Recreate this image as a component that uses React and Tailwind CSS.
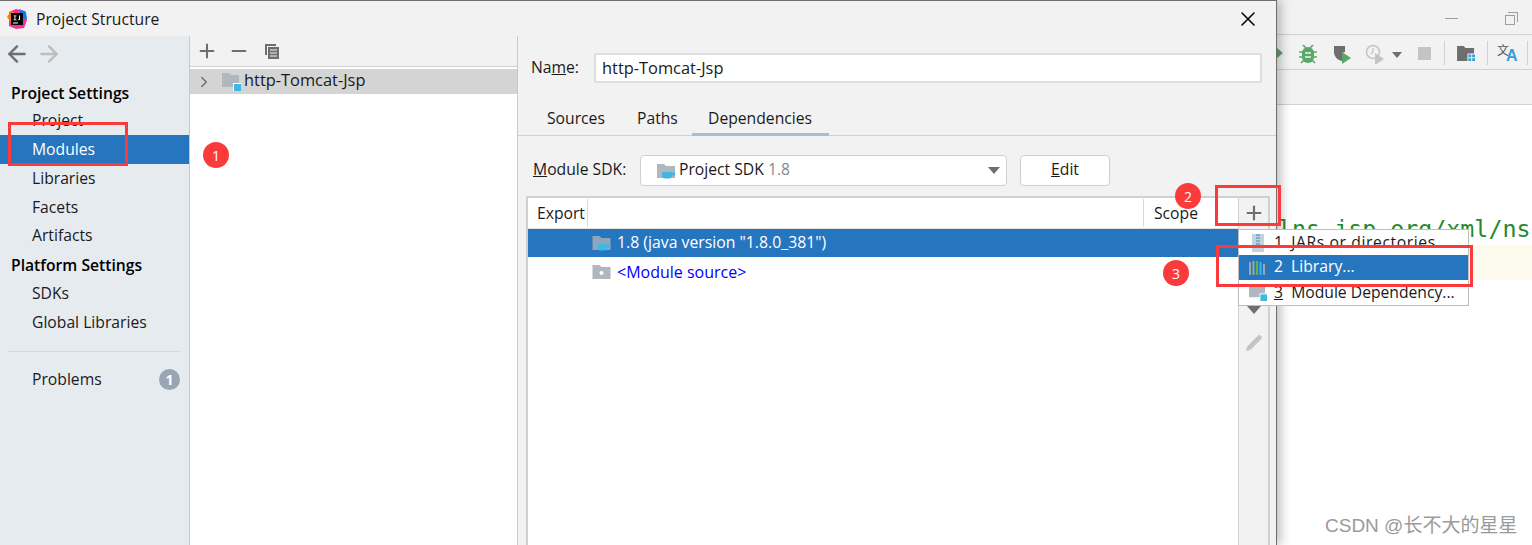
import React from 'react';
import { Plus, Minus, Pencil, X, ChevronRight, ArrowLeft, ArrowRight } from 'lucide-react';

const FolderIcon = ({ className = '', fill = '#afb8bf', children }) => (
  <svg viewBox="0 0 18 16" className={className}>
    <path d="M0 1h7l2 2h9v12H0z" fill={fill} />
    {children}
  </svg>
);

const CupBadge = () => (
  <g fill="#40b6e0">
    <path d="M5 9h10v3.500a3 3 0 0 1-3 3H8a3 3 0 0 1-3-3z" />
    <path d="M15 9.500h3v3h-3z" />
  </g>
);

const ModuleIcon = ({ className = '' }) => (
  <svg viewBox="0 0 20 18" className={className}>
    <path d="M0 0h7l2 2h8v12H0z" fill="#afb8bf" />
    <path d="M11 10h8v8h-8z" fill="#fff" />
    <path d="M12 11h7v7h-7z" fill="#40b6e0" />
  </svg>
);

const SideItem = ({ label, active }) => (
  <div className={`h-[28.8px] flex items-center pl-8 pt-px ${active ? 'bg-[#2675bf] text-white' : 'text-[#1a1a1a]'}`}>{label}</div>
);

const RedBox = ({ className }) => <div className={`absolute border-[3px] border-[#fb3a3c] ${className}`} />;

const RedDot = ({ n, className }) => (
  <div className={`absolute w-[26px] h-[26px] rounded-full bg-[#fb3a3c] text-white text-[14px] flex items-center justify-center ${className}`}>{n}</div>
);

const IdeToolbar = () => (
  <div className="h-[35px] border-b border-[#d1d1d1] relative overflow-hidden">
    <svg viewBox="0 0 6 10" className="w-[6px] h-[10px] absolute left-0 top-[13px]"><path d="M0 0l6 5-6 5z" fill="#59a869" /></svg>
    <svg viewBox="0 0 20 20" className="w-5 h-5 absolute left-[21px] top-[9px]">
      <path d="M10 3a6 6 0 0 1 6 6v4a6 6 0 0 1-12 0V9a6 6 0 0 1 6-6z" fill="#59a869" />
      <path d="M5 1l3 3M15 1l-3 3M1 8h4M19 8h-4M1 13h4M19 13h-4M3 19l3-3M17 19l-3-3" stroke="#59a869" strokeWidth="1.600" />
      <path d="M7 9h6M7 13h6" stroke="#f2f2f2" strokeWidth="1.500" />
    </svg>
    <svg viewBox="0 0 20 20" className="w-5 h-5 absolute left-[55px] top-[9px]">
      <path d="M2 2h11v6l-3 1v8C5 16 2 12 2 8z" fill="#6e6e6e" />
      <path d="M10 8l9 6-9 6z" fill="#59a869" />
    </svg>
    <svg viewBox="0 0 20 20" className="w-5 h-5 absolute left-[88px] top-[9px]">
      <circle cx="8" cy="8" r="6.500" fill="none" stroke="#c4c4c4" strokeWidth="1.500" />
      <path d="M8 4v4l-2 2" fill="none" stroke="#c4c4c4" strokeWidth="1.200" />
      <path d="M10 9l9 6-9 6z" fill="#c4c4c4" />
    </svg>
    <svg viewBox="0 0 10 6" className="w-[10px] h-[6px] absolute left-[115px] top-[17px]"><path d="M0 0h10L5 6z" fill="#6e6e6e" /></svg>
    <div className="absolute left-[141px] top-[12px] w-[13px] h-[13px] bg-[#c4c4c4]" />
    <div className="absolute left-[167px] top-[6px] w-px h-[24px] bg-[#d1d1d1]" />
    <svg viewBox="0 0 20 18" className="w-[19px] h-[17px] absolute left-[180px] top-[11px]">
      <path d="M0 0h7l2 2h9v6h-7v8H0z" fill="#6e6e6e" />
      <path d="M12 9h3v3h-3zM16 9h3v3h-3zM12 13h3v3h-3zM16 13h3v3h-3z" fill="#389fd6" />
    </svg>
    <div className="absolute left-[210px] top-[6px] w-px h-[24px] bg-[#d1d1d1]" />
    <div className="absolute left-[220px] top-[8px] w-[22px] h-[20px]">
      <span className="absolute left-0 top-0 text-[12px] leading-[13px] text-[#555] font-['Noto_Sans_CJK_SC',sans-serif]">文</span>
      <span className="absolute left-[9px] top-[4px] text-[16px] leading-[17px] font-bold text-[#389fd6] font-['Liberation_Sans',sans-serif]">A</span>
    </div>
    <div className="absolute left-[250px] top-[6px] w-px h-[24px] bg-[#d1d1d1]" />
  </div>
);

const App = () => {
  return (
    <div className="relative w-[1532px] h-[545px] overflow-hidden flex bg-white text-[15.7px] text-[#1a1a1a] font-['Open_Sans','Noto_Sans',sans-serif]">
      {/* Dialog */}
      <div className="w-[1277px] h-full shrink-0 flex flex-col border-t border-[#6e6e6e] border-r shadow-[4px_0_10px_rgba(0,0,0,0.25)] z-10 bg-white">
        <div className="h-[35px] shrink-0 bg-[#f2f2f2] flex items-center pl-[7px] pr-[16px]">
          <svg viewBox="0 0 20 20" className="w-5 h-5">
            <path d="M2 3l7-3 9 2 2 9-3 8-8 1-7-3z" fill="#fc318c" />
            <path d="M0 8l4-6 4 2-2 12z" fill="#f97a12" />
            <path d="M12 0l7 3 1 8-5-3z" fill="#087cfa" />
            <path d="M4 4h12v12H4z" fill="#000" />
            <path d="M6 13.500h5v1H6z" fill="#fff" />
            <path d="M6.500 6.500h3v.8H8.400v3.200h1.100v.8h-3v-.8h1V7.300h-1zM12 6.500h1v3.800a1 1 0 0 1-2 0h.8c0 .4.2.4.2 0z" fill="#fff" />
          </svg>
          <span className="ml-[9px] text-[#1a1a1a] pt-[3px]">Project Structure</span>
          <X className="ml-auto w-6 h-6 text-black" strokeWidth={1.5} />
        </div>

        <div className="flex-1 flex min-h-0">
          {/* Sidebar */}
          <div className="w-[190px] shrink-0 bg-[#e6ebf0] border-r border-[#c9c9c9] flex flex-col">
            <div className="h-[36px] flex items-center pl-[4px] gap-[6px]">
              <ArrowLeft className="w-[26px] h-[26px] text-[#6e6e6e]" strokeWidth={2.2} />
              <ArrowRight className="w-[26px] h-[26px] text-[#bdbdbd]" strokeWidth={2.2} />
            </div>
            <div className="mt-[8px]">
              <div className="h-[26px] flex items-center pl-[11px] pt-[2px] font-semibold text-black">Project Settings</div>
              <SideItem label="Project" />
              <SideItem label="Modules" active />
              <SideItem label="Libraries" />
              <SideItem label="Facets" />
              <SideItem label="Artifacts" />
              <div className="h-[29px] flex items-center pl-[11px] pt-[2px] font-semibold text-black">Platform Settings</div>
              <SideItem label="SDKs" />
              <SideItem label="Global Libraries" />
            </div>
            <div className="mt-[14px] mx-2 h-px bg-[#d9d9d9]" />
            <div className="mt-[13px] h-[29px] flex items-center pl-8 pr-[9px] justify-between">
              <span className="pt-[2px]">Problems</span>
              <span className="w-[21px] h-[21px] rounded-full bg-[#99a5b3] text-white text-[14px] font-bold flex items-center justify-center">1</span>
            </div>
          </div>

          {/* Module tree */}
          <div className="w-[328px] shrink-0 bg-white border-r border-[#c9c9c9] flex flex-col">
            <div className="h-[31px] bg-[#f2f2f2] border-b border-[#d1d1d1] flex items-center pl-[6px] gap-[10px]">
              <Plus className="w-[22px] h-[22px] text-[#6e6e6e]" strokeWidth={2.2} />
              <Minus className="w-[22px] h-[22px] text-[#6e6e6e]" strokeWidth={2.2} />
              <svg viewBox="0 0 16 16" className="ml-[4px] w-[16px] h-[16px]">
                <path d="M1 1h11v2H3v9H1z" fill="#6e6e6e" />
                <path d="M4 4h11v12H4z" fill="#6e6e6e" />
                <path d="M6 7h7M6 10h7M6 13h7" stroke="#f2f2f2" strokeWidth="1" />
              </svg>
            </div>
            <div className="mt-[2px] h-[25px] bg-[#d4d4d4] flex items-center pl-[5px]">
              <ChevronRight className="w-[18px] h-[18px] text-[#6e6e6e]" strokeWidth={2} />
              <ModuleIcon className="ml-[9px] w-[20px] h-[18px]" />
              <span className="ml-[2px] text-[16.400px] -mt-[2px]">http-Tomcat-Jsp</span>
            </div>
          </div>

          {/* Details */}
          <div className="flex-1 min-w-0 bg-[#f2f2f2] flex flex-col">
            <div className="h-[30px] mt-[17px] flex items-center pl-[13px] pr-[14px]">
              <span className="w-[63px] shrink-0">Na<span className="underline">m</span>e:</span>
              <div className="flex-1 h-[30px] bg-white border-2 border-[#dedede] flex items-center pl-[6px] text-[16.400px]">http-Tomcat-Jsp</div>
            </div>
            <div className="mt-[21px] h-[32px] border-b border-[#d1d1d1] flex pl-[13px] pt-[3px]">
              <div className="w-[90px] pl-[16px]">Sources</div>
              <div className="w-[71px] pl-[16px]">Paths</div>
              <div className="w-[137px] pl-[16px] border-b-[3px] border-[#a9bdcf] h-[29px]">Dependencies</div>
            </div>
            <div className="mt-[19px] h-[31px] flex items-center pl-[15px]">
              <span className="w-[107px] shrink-0 pb-[2px]"><span className="underline">M</span>odule SDK:</span>
              <div className="w-[367px] h-[31px] bg-white border border-[#cfcfcf] rounded-[4px] flex items-center pl-[16px] pr-[6px]">
                <FolderIcon className="w-[18px] h-[16px]"><CupBadge /></FolderIcon>
                <span className="ml-[4px] pb-[2px]">Project SDK <span className="text-[#808a94]">1.8</span></span>
                <svg viewBox="0 0 12 7" className="ml-auto w-[12px] h-[7px]"><path d="M0 0h12L6 7z" fill="#6e6e6e" /></svg>
              </div>
              <div className="ml-[13px] w-[90px] h-[31px] bg-white border border-[#cfcfcf] rounded-[4px] flex items-center justify-center"><span className="pb-[2px]"><span className="underline">E</span>dit</span></div>
            </div>
            <div className="mt-[10px] ml-[8px] mr-[6px] flex-1 bg-white border-2 border-b-0 border-[#d1d1d1] flex">
              <div className="flex-1 min-w-0">
                <div className="h-[31px] border-b border-[#e3e3e3] flex items-center">
                  <div className="w-[60px] h-[28px] border-r border-[#d9d9d9] pl-[9px] pt-[2px] flex items-center">Export</div>
                  <div className="ml-auto w-[95px] h-[28px] border-l border-[#d9d9d9] pl-[10px] pt-[2px] flex items-center">Scope</div>
                </div>
                <div className="h-[28px] bg-[#2675bf] text-white flex items-center pl-[64px]">
                  <FolderIcon className="w-[19px] h-[16px]" fill="#8fa6ba"><CupBadge /></FolderIcon>
                  <span className="ml-[6px] text-[15.800px]">1.8 (java version "1.8.0_381")</span>
                </div>
                <div className="h-[29px] flex items-center pl-[64px]">
                  <FolderIcon className="w-[19px] h-[16px]"><circle cx="9" cy="9" r="2" fill="#fff" /></FolderIcon>
                  <span className="ml-[6px] text-[#0000ff] text-[16px]">&lt;Module source&gt;</span>
                </div>
              </div>
              <div className="w-[30px] shrink-0 bg-[#f2f2f2] border-l border-[#d1d1d1] flex flex-col items-center">
                <Plus className="mt-[4px] w-[22px] h-[22px] text-[#6e6e6e]" strokeWidth={2.4} />
                <svg viewBox="0 0 14 8" className="mt-[82px] w-[14px] h-[8px]"><path d="M0 0h14L7 8z" fill="#6e6e6e" /></svg>
                <Pencil className="mt-[20px] w-[18px] h-[18px] text-[#c4c4c4]" fill="#c4c4c4" strokeWidth={1} />
              </div>
            </div>
          </div>
        </div>
      </div>

      {/* IDE behind the dialog */}
      <div className="flex-1 min-w-0 flex flex-col">
        <div className="h-[35px] bg-[#f2f2f2] border-b border-[#d1d1d1] relative">
          <div className="absolute left-[168px] top-[18px] w-[13px] h-px bg-[#9e9e9e]" />
          <div className="absolute left-[228px] top-[15px] w-[10px] h-[10px] border border-[#9e9e9e]" />
          <div className="absolute left-[231px] top-[12px] w-[10px] h-[10px] border-t border-r border-[#9e9e9e]" />
        </div>
        <div className="bg-[#f2f2f2]"><IdeToolbar /></div>
        <div className="h-[35px] bg-[#f2f2f2] border-b border-[#d1d1d1]" />
        <div className="flex-1 bg-white relative">
          <div className="absolute left-[1px] top-[109px] text-[23.300px] leading-[30px] text-[#1f8a2e] whitespace-nowrap font-['DejaVu_Sans_Mono',monospace]">lns.jsp.org/xml/ns</div>
          <div className="mt-[140px] h-[35px] bg-[#fcfaed]" />
        </div>
      </div>

      {/* Add dependency popup */}
      <div className="absolute left-[1238px] top-[229px] w-[231px] h-[77px] z-20 bg-white border border-[#bdbdbd] flex flex-col">
        <div className="h-[25px] flex items-center pl-[12px]">
          <svg viewBox="0 0 14 18" className="w-[14px] h-[18px]">
            <rect x="1" y="0" width="12" height="18" fill="#c5d2dc" />
            <path d="M5 1h4M5 4h4M5 7h4M5 10h4M5 13h4" stroke="#55a8d8" strokeWidth="1.500" />
          </svg>
          <span className="ml-[9px] whitespace-nowrap">1&nbsp; <span className="tracking-[0.6px]">JARs or directories...</span></span>
        </div>
        <div className="h-[25px] bg-[#2675bf] text-white flex items-center pl-[10px]">
          <svg viewBox="0 0 18 14" className="w-[18px] h-[14px]">
            <path d="M1 1v13M4.500 0v14" stroke="#9aa7b0" strokeWidth="2" />
            <path d="M8 0v14" stroke="#62b543" strokeWidth="2" />
            <path d="M11.500 1v13" stroke="#40b6e0" strokeWidth="2" />
            <path d="M15 3v11" stroke="#9aa7b0" strokeWidth="2" />
          </svg>
          <span className="ml-[7px] pb-px">2&nbsp; Library...</span>
        </div>
        <div className="h-[25px] flex items-center pl-[10px]">
          <ModuleIcon className="w-[19px] h-[17px]" />
          <span className="ml-[6px] whitespace-nowrap"><span className="underline">3</span>&nbsp; Module Dependency...</span>
        </div>
      </div>

      {/* Annotations */}
      <RedBox className="left-[8px] top-[122px] w-[120px] h-[44px] z-30" />
      <RedBox className="left-[1215px] top-[185px] w-[66px] h-[41px] z-30" />
      <RedBox className="left-[1216px] top-[245px] w-[257px] h-[42px] z-30" />
      <RedDot n="1" className="left-[203px] top-[142px] z-30" />
      <RedDot n="2" className="left-[1175px] top-[183px] z-30" />
      <RedDot n="3" className="left-[1163px] top-[260px] z-30" />

      <div className="absolute left-[1325px] top-[514px] z-30 text-[#9a9a9a] text-[19px] leading-[24px] whitespace-nowrap font-['Liberation_Sans','Noto_Sans_CJK_SC',sans-serif]">CSDN @长不大的星星</div>
    </div>
  );
};

export default App;
